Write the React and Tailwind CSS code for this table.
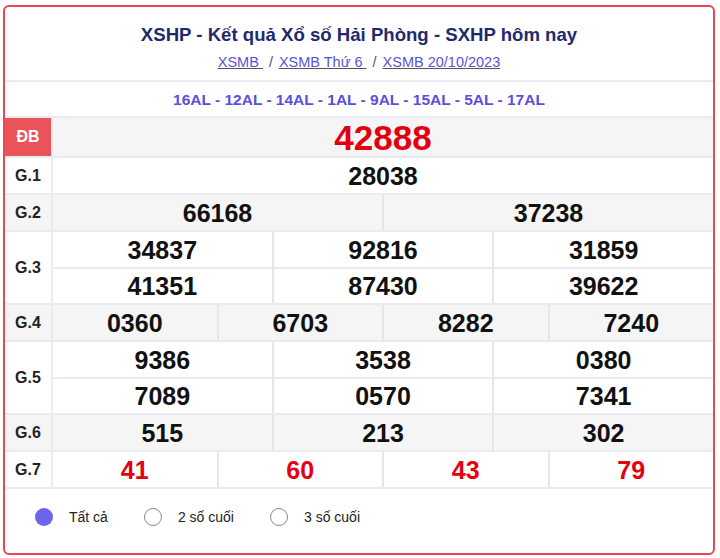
import React from 'react';

const rows = [
  { label: 'G.1', cols: [['28038']] },
  { label: 'G.2', cols: [['66168'], ['37238']] },
  { label: 'G.3', cols: [['34837', '41351'], ['92816', '87430'], ['31859', '39622']] },
  { label: 'G.4', cols: [['0360'], ['6703'], ['8282'], ['7240']] },
  { label: 'G.5', cols: [['9386', '7089'], ['3538', '0570'], ['0380', '7341']] },
  { label: 'G.6', cols: [['515'], ['213'], ['302']] },
  { label: 'G.7', cols: [['41'], ['60'], ['43'], ['79']], red: true },
];

function PrizeRow({ row, index }) {
  return (
    <div className={`flex border-b-2 border-[#ebebef] ${index % 2 === 1 ? 'bg-[#f5f5f5]' : 'bg-white'}`}>
      <div className="w-[48px] shrink-0 border-r-2 border-[#ebebef] flex items-center justify-center text-[16px] font-bold text-[#222]">
        {row.label}
      </div>
      <div className="flex-1 flex">
        {row.cols.map((col, i) => (
          <div key={i} className={`flex-1 flex flex-col ${i > 0 ? 'border-l-2 border-[#e6e6ea]' : ''}`}>
            {col.map((n, j) => (
              <div
                key={j}
                className={`flex items-center justify-center pt-[2px] text-[25px] font-bold ${
                  row.red ? 'text-[#e3000f]' : 'text-[#111]'
                } ${j > 0 ? 'h-[36px] border-t-2 border-[#ebebef]' : 'h-[35px]'}`}
              >
                {n}
              </div>
            ))}
          </div>
        ))}
      </div>
    </div>
  );
}

export default function App() {
  return (
    <div className="w-[720px] h-[558px] bg-white pt-[5px] px-[3px] font-['Liberation_Sans',Arial,sans-serif]">
      <div className="w-[712px] border-2 border-[#e9484f] rounded-md bg-white overflow-hidden">
        {/* Header */}
        <div className="text-center pt-[16px] pb-[8px] border-b-2 border-[#ebebef]">
          <h1 className="text-[18.6px] leading-[24px] font-bold text-[#1f2a6e]">
            XSHP - Kết quả Xổ số Hải Phòng - SXHP hôm nay
          </h1>
          <div className="mt-[5px] text-[14.5px] leading-[20px] text-[#555]">
            <a className="text-[#5c52d8] underline decoration-[#555]">XSMB </a>
            <span className="mx-[6px]">/</span>
            <a className="text-[#5c52d8] underline decoration-[#555]">XSMB Thứ 6 </a>
            <span className="mx-[6px]">/</span>
            <a className="text-[#5c52d8] underline decoration-[#555]">XSMB 20/10/2023</a>
          </div>
        </div>

        {/* Loto */}
        <div className="h-[36px] flex items-center justify-center pt-[1px] border-b-2 border-[#ebebef] text-[15.5px] font-bold text-[#5a4fdc]">
          16AL - 12AL - 14AL - 1AL - 9AL - 15AL - 5AL - 17AL
        </div>

        {/* Special prize */}
        <div className="flex border-b-2 border-[#ebebef] bg-[#f5f5f5]">
          <div className="w-[48px] shrink-0 bg-[#e9545a] border-r-2 border-[#ebebef] flex items-center justify-center text-[16px] font-bold text-white">
            ĐB
          </div>
          <div className="flex-1 h-[38px] flex items-center justify-center pt-[2px] text-[35px] font-bold text-[#e3000f]">
            42888
          </div>
        </div>

        {rows.map((row, i) => (
          <PrizeRow key={row.label} row={row} index={i} />
        ))}

        {/* Filter */}
        <div className="h-[64px] flex items-center pb-[8px] pl-[30px] text-[14px] text-[#222]">
          <label className="flex items-center mr-[36px]">
            <span className="w-[18px] h-[18px] rounded-full bg-[#6c63ef]" />
            <span className="ml-[16px]">Tất cả</span>
          </label>
          <label className="flex items-center mr-[36px]">
            <span className="w-[18px] h-[18px] rounded-full border border-[#888] bg-white" />
            <span className="ml-[16px]">2 số cuối</span>
          </label>
          <label className="flex items-center">
            <span className="w-[18px] h-[18px] rounded-full border border-[#888] bg-white" />
            <span className="ml-[16px]">3 số cuối</span>
          </label>
        </div>
      </div>
    </div>
  );
}
